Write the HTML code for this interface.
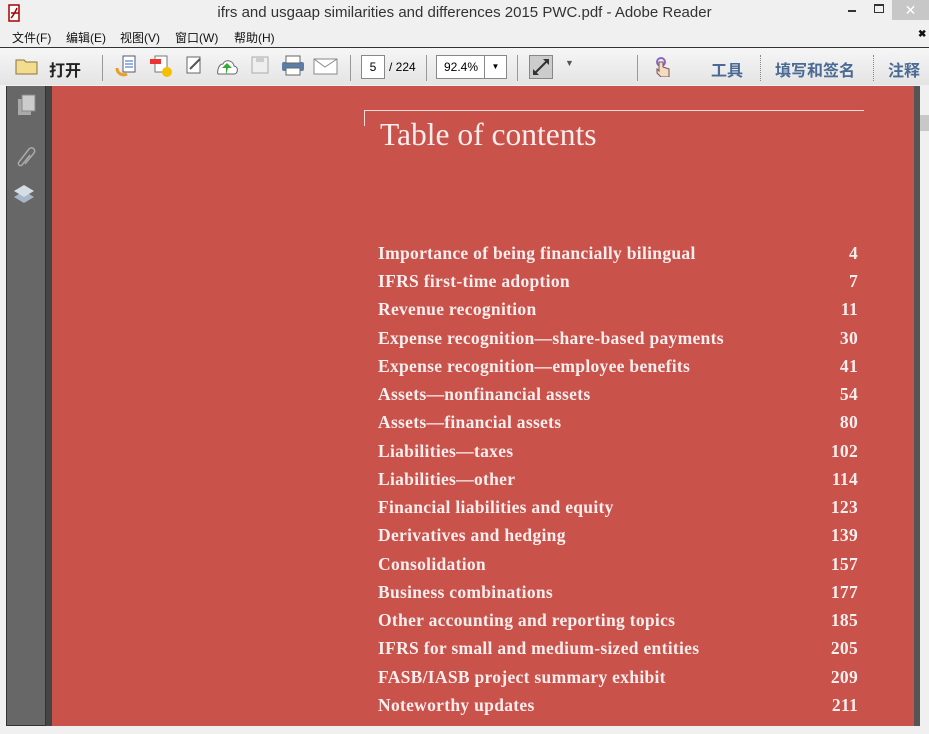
<!DOCTYPE html>
<html><head><meta charset="utf-8"><style>
*{margin:0;padding:0;box-sizing:border-box}
body{width:929px;height:734px;overflow:hidden;background:#f0f0f0;font-family:"Liberation Sans","Noto Sans CJK SC",sans-serif;position:relative}
.abs{position:absolute}
.title{top:0;left:0;width:929px;height:26px;background:#f0f0f0;font-size:15px;color:#333;text-align:center;line-height:26px}
.menu{top:27px;left:0;width:929px;height:20px;font-size:12px;color:#111}
.menu span{position:absolute;top:2px}
.tb{top:47px;left:0;width:929px;height:38px;background:linear-gradient(#f6f6f6,#e4e4e4);border-top:1px solid #333}
.sep{position:absolute;top:7px;width:1px;height:26px;background:#999}
.cn{position:absolute;top:9px;font-size:16px;font-weight:bold;color:#4a6a94}
.side{top:86px;left:6px;width:40px;height:640px;background:#676767;border:1px solid #333;border-top:none}
.page{top:86px;left:52px;width:862px;height:640px;background:#c9524a}
.serif{font-family:"Liberation Serif","DejaVu Serif",serif;color:#fbeeee}
.row{position:absolute;left:378px;width:480px;font-size:17.5px;letter-spacing:0.3px;font-weight:bold}
.row b{position:absolute;right:0;top:0}
</style></head><body>
<div class="abs title">ifrs and usgaap similarities and differences 2015 PWC.pdf - Adobe Reader</div>
<svg class="abs" style="left:6px;top:3px" width="18" height="20"><path d="M3 2h10v16H3z" fill="#fff" stroke="#a00" stroke-width="1.5"/><path d="M5 15c3-3 5-8 6-10M5 10h8" stroke="#a00" stroke-width="1.5" fill="none"/></svg>
<div class="abs" style="left:848px;top:10px;width:8px;height:2px;background:#333"></div>
<div class="abs" style="left:874px;top:4px;width:10px;height:9px;border:1.5px solid #333;border-top-width:2px"></div>
<div class="abs" style="left:892px;top:0;width:37px;height:20px;background:#c7c7c7;color:#fff;text-align:center;font-size:14px;line-height:20px">✕</div>
<div class="abs menu"><span style="left:12px">文件(F)</span><span style="left:66px">编辑(E)</span><span style="left:120px">视图(V)</span><span style="left:175px">窗口(W)</span><span style="left:234px">帮助(H)</span><span style="left:918px;font-size:10px;font-weight:bold">✖</span></div>
<div class="abs tb">
<svg style="position:absolute;left:15px;top:9px" width="24" height="18"><path d="M1 3h8l2 2h11v12H1z" fill="#f3dc8e" stroke="#8a7440"/></svg>
<div class="cn" style="left:49px;color:#222">打开</div>
<div class="sep" style="left:102px"></div>
<svg style="position:absolute;left:115px;top:6px" width="230" height="26">
<rect x="8" y="2" width="12" height="16" fill="#fff" stroke="#557"/><path d="M10 7h8M10 10h8M10 13h8" stroke="#36c"/><path d="M2 14c0 6 6 8 10 6" stroke="#e9a020" stroke-width="3" fill="none"/>
<rect x="40" y="2" width="12" height="16" fill="#fff" stroke="#777"/><rect x="35" y="5" width="11" height="5" fill="#e33"/><circle cx="52" cy="18" r="5" fill="#f4c000"/>
<rect x="72" y="3" width="13" height="16" fill="#fff" stroke="#666"/><path d="M75 15l10-10" stroke="#555" stroke-width="2"/>
<path d="M103 20h16c4 0 5-7 0-8c-1-6-9-7-11-2c-5 0-6 9-5 10z" fill="#fff" stroke="#666"/><path d="M111 21v-7h-4l5-5 5 5h-4" fill="#3a3"/>
<rect x="137" y="3" width="16" height="16" fill="#eee" stroke="#aaa"/><rect x="141" y="3" width="8" height="5" fill="#ccc"/>
<rect x="167" y="8" width="22" height="9" rx="2" fill="#5a7ea8"/><rect x="171" y="2" width="14" height="7" fill="#fff" stroke="#666"/><rect x="171" y="14" width="14" height="7" fill="#fff" stroke="#666"/>
<rect x="199" y="5" width="23" height="15" fill="#fff" stroke="#888"/><path d="M199 5l11 8 12-8" stroke="#888" fill="none"/>
</svg>
<div class="sep" style="left:350px"></div>
<div style="position:absolute;left:361px;top:7px;width:24px;height:24px;background:#fff;border:1px solid #888;font-size:12px;text-align:center;line-height:22px">5</div>
<div style="position:absolute;left:389px;top:12px;font-size:12px">/ 224</div>
<div class="sep" style="left:426px"></div>
<div style="position:absolute;left:436px;top:7px;width:71px;height:24px;background:#fff;border:1px solid #888;font-size:12px;line-height:22px;padding-left:7px">92.4%<span style="position:absolute;left:47px;top:0;width:22px;height:22px;border-left:1px solid #888;text-align:center;font-size:8px">▼</span></div>
<div class="sep" style="left:517px"></div>
<div style="position:absolute;left:529px;top:7px;width:24px;height:24px;background:#ccc;border:1px solid #888"><svg width="22" height="22"><path d="M4 18l14-14" stroke="#333" stroke-width="2"/><path d="M3 19v-6l6 6zM19 3v6l-6-6z" fill="#333"/></svg></div>
<div style="position:absolute;left:565px;top:10px;font-size:9px;color:#555">▼</div>
<div class="sep" style="left:637px"></div>
<svg style="position:absolute;left:654px;top:9px" width="18" height="20"><circle cx="7" cy="5" r="4" fill="none" stroke="#86c" stroke-width="2"/><path d="M5 5v9l-2-2v4l4 4h8v-8l-6-2v-5z" fill="#f3dcc0" stroke="#755"/></svg>
<div class="cn" style="left:711px">工具</div>
<div class="sep" style="left:760px;background:none;border-left:1px dotted #888"></div>
<div class="cn" style="left:775px">填写和签名</div>
<div class="sep" style="left:873px;background:none;border-left:1px dotted #888"></div>
<div class="cn" style="left:888px">注释</div>
</div>
<div class="abs side">
<svg style="position:absolute;left:6px;top:8px" width="28" height="130">
<rect x="5" y="5" width="13" height="16" fill="#aaa"/><rect x="9" y="1" width="13" height="16" fill="#ccc" stroke="#888"/>
<path d="M12 70l9-11a3 3 0 0 0-5-4l-10 13a2 2 0 0 0 3 3l8-10" stroke="#aaa" stroke-width="1.5" fill="none"/>
<path d="M1 103l10-6 10 6-10 6z" fill="#a6b8c8"/><path d="M1 97l10-6 10 6-10 6z" fill="#d5dde5"/>
</svg>
</div>
<div class="abs" style="top:86px;left:46px;width:6px;height:640px;background:#444"></div>
<div class="abs page"></div>
<div class="abs" style="top:86px;left:914px;width:6px;height:640px;background:#555"></div>
<div class="abs" style="top:86px;left:920px;width:9px;height:640px;background:#f0f0f0"></div>
<div class="abs" style="top:115px;left:920px;width:9px;height:16px;background:#c8c8c8"></div>
<div class="abs" style="top:110px;left:364px;width:500px;height:1px;background:#f4dada"></div>
<div class="abs" style="top:110px;left:364px;width:1px;height:16px;background:#f4dada"></div>
<div class="abs serif" style="top:117px;left:380px;font-size:31.5px">Table of contents</div>
<div class="serif">
<div class="row" style="top:243px">Importance of being financially bilingual<b>4</b></div>
<div class="row" style="top:271px">IFRS first-time adoption<b>7</b></div>
<div class="row" style="top:299px">Revenue recognition<b>11</b></div>
<div class="row" style="top:328px">Expense recognition—share-based payments<b>30</b></div>
<div class="row" style="top:356px">Expense recognition—employee benefits<b>41</b></div>
<div class="row" style="top:384px">Assets—nonfinancial assets<b>54</b></div>
<div class="row" style="top:412px">Assets—financial assets<b>80</b></div>
<div class="row" style="top:441px">Liabilities—taxes<b>102</b></div>
<div class="row" style="top:469px">Liabilities—other<b>114</b></div>
<div class="row" style="top:497px">Financial liabilities and equity<b>123</b></div>
<div class="row" style="top:525px">Derivatives and hedging<b>139</b></div>
<div class="row" style="top:554px">Consolidation<b>157</b></div>
<div class="row" style="top:582px">Business combinations<b>177</b></div>
<div class="row" style="top:610px">Other accounting and reporting topics<b>185</b></div>
<div class="row" style="top:638px">IFRS for small and medium-sized entities<b>205</b></div>
<div class="row" style="top:667px">FASB/IASB project summary exhibit<b>209</b></div>
<div class="row" style="top:695px">Noteworthy updates<b>211</b></div>
</div>
<div class="abs" style="top:726px;left:0;width:929px;height:8px;background:#f0f0f0"></div>
</body></html>
